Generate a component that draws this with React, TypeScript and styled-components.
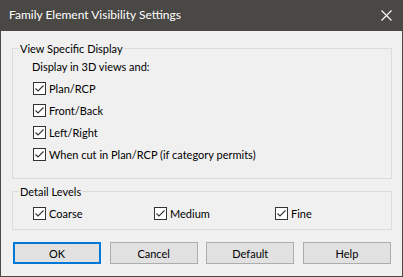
import React from "react";
import styled, { createGlobalStyle } from "styled-components";

const Global = createGlobalStyle`
  html, body { margin: 0; padding: 0; background: #f0f0f0; }
  body { font-family: "Segoe UI", Lato, sans-serif; font-size: 11px; color: #000; }
`;

const Window = styled.div`
  width: 403px;
  height: 277px;
  box-sizing: border-box;
  border: 1px solid #4a4845;
  border-top: none;
  background: #f0f0f0;
  display: flex;
  flex-direction: column;
`;

const TitleBar = styled.div`
  height: 31px;
  margin: 0 -1px;
  background: #4a4845;
  color: #fff;
  display: flex;
  align-items: center;
  justify-content: space-between;
  padding-left: 9px;
  box-sizing: border-box;
`;

const Title = styled.span`
  font-size: 12px;
  line-height: 16px;
  margin-top: -1px;
`;

const CloseButton = styled.div`
  width: 46px;
  height: 31px;
  display: flex;
  align-items: center;
  justify-content: center;
  padding-left: 13px;
  box-sizing: border-box;
`;

const Content = styled.div`
  flex: 1;
  display: flex;
  flex-direction: column;
  padding: 10px 10px 0 11px;
`;

const Group = styled.fieldset<{ $height: number; $gap?: number }>`
  margin: ${(p) => p.$gap ?? 0}px 0 0;
  padding: 0;
  border: 1px solid #dcdcdc;
  height: ${(p) => p.$height}px;
  box-sizing: border-box;
  min-width: 0;
`;

const Legend = styled.legend`
  margin-left: 6px;
  padding: 0 1px;
  font-size: 11px;
  line-height: 15px;
`;

const GroupBody = styled.div<{ $top: number }>`
  padding: ${(p) => p.$top}px 0 0 19px;
  display: flex;
  flex-direction: column;
`;

const Caption = styled.div`
  line-height: 16px;
  margin-bottom: 3px;
`;

const CheckRow = styled.label<{ $width?: number }>`
  display: flex;
  align-items: flex-start;
  gap: 3px;
  height: 22px;
  padding-left: 1px;
  width: ${(p) => (p.$width ? `${p.$width}px` : "auto")};
`;

const CheckText = styled.span`
  line-height: 21px;
`;

const HRow = styled.div`
  display: flex;
`;

const Box = styled.svg`
  flex: none;
  display: block;
  margin-top: 4px;
`;

const ButtonBar = styled.div`
  display: flex;
  justify-content: space-between;
  margin-top: 12px;
  padding: 0 1px;
`;

const Button = styled.button<{ $default?: boolean }>`
  width: 88px;
  height: 22px;
  box-sizing: border-box;
  background: #e1e1e1;
  border: ${(p) => (p.$default ? "2px solid #0078d7" : "1px solid #adadad")};
  font-family: inherit;
  font-size: 11px;
  color: #000;
  padding: 0;
  margin: 0;
`;

const Check = () => (
  <Box width="13" height="13" viewBox="0 0 13 13">
    <rect x="0.5" y="0.5" width="12" height="12" fill="#fff" stroke="#333" />
    <path d="M2.5 6.5 L5 9 L10.5 3.5" fill="none" stroke="#333" strokeWidth="1.1" />
  </Box>
);

const CheckItem = ({ label, width }: { label: string; width?: number }) => (
  <CheckRow $width={width}>
    <Check />
    <CheckText>{label}</CheckText>
  </CheckRow>
);

export default function App() {
  return (
    <>
      <Global />
      <Window>
        <TitleBar>
          <Title>Family Element Visibility Settings</Title>
          <CloseButton>
            <svg width="11" height="11" viewBox="0 0 11 11">
              <path d="M0.5 0.5 L10.5 10.5 M10.5 0.5 L0.5 10.5" stroke="#fff" strokeWidth="1.1" />
            </svg>
          </CloseButton>
        </TitleBar>
        <Content>
          <Group $height={138}>
            <Legend>View Specific Display</Legend>
            <GroupBody $top={3}>
              <Caption>Display in 3D views and:</Caption>
              <CheckItem label="Plan/RCP" />
              <CheckItem label="Front/Back" />
              <CheckItem label="Left/Right" />
              <CheckItem label="When cut in Plan/RCP (if category permits)" />
            </GroupBody>
          </Group>
          <Group $height={46} $gap={5}>
            <Legend>Detail Levels</Legend>
            <GroupBody $top={4}>
              <HRow>
                <CheckItem label="Coarse" width={120} />
                <CheckItem label="Medium" width={120} />
                <CheckItem label="Fine" />
              </HRow>
            </GroupBody>
          </Group>
          <ButtonBar>
            <Button $default>OK</Button>
            <Button>Cancel</Button>
            <Button>Default</Button>
            <Button>Help</Button>
          </ButtonBar>
        </Content>
      </Window>
    </>
  );
}
